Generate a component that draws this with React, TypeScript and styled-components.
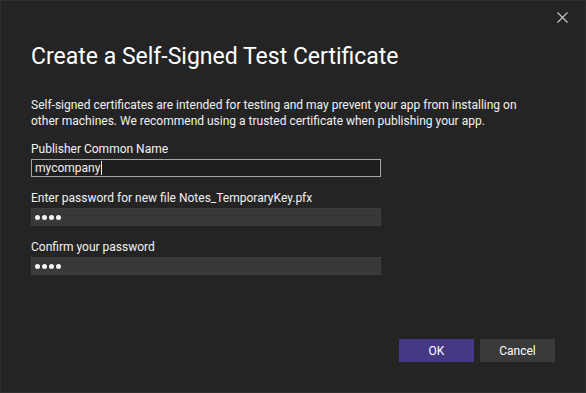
import styled, { createGlobalStyle } from 'styled-components';

const GlobalStyle = createGlobalStyle`
  html, body {
    margin: 0;
    padding: 0;
    background: #242424;
  }
  * {
    box-sizing: border-box;
  }
`;

// password fields just show masked dots
const fields = [
  { label: 'Publisher Common Name', value: 'mycompany', secret: false },
  { label: 'Enter password for new file Notes_TemporaryKey.pfx', value: 'pass', secret: true },
  { label: 'Confirm your password', value: 'pass', secret: true },
];

export default function App() {
  return (
    <>
      <GlobalStyle />
      <Dialog>
        <CloseButton aria-label="Close">
          <svg width="11" height="11" viewBox="0 0 11 11">
            <path d="M0.5 0.5 L10.5 10.5 M10.5 0.5 L0.5 10.5" stroke="#c8c8c8" strokeWidth="1.1" />
          </svg>
        </CloseButton>

        <Title>Create a Self-Signed Test Certificate</Title>
        <Description>
          Self-signed certificates are intended for testing and may prevent your app from installing on
          other machines. We recommend using a trusted certificate when publishing your app.
        </Description>

        <Form>
          {fields.map((f) => (
            <Field key={f.label}>
              <Label>{f.label}</Label>
              <InputBox $focused={!f.secret}>
                {f.secret ? (
                  <Dots>
                    {f.value.split('').map((_, i) => (
                      <Dot key={i} />
                    ))}
                  </Dots>
                ) : (
                  <>
                    {f.value}
                    <Caret />
                  </>
                )}
              </InputBox>
            </Field>
          ))}
        </Form>

        <Footer>
          <Button $primary>OK</Button>
          <Button>Cancel</Button>
        </Footer>
      </Dialog>
    </>
  );
}

const Dialog = styled.div`
  position: relative;
  width: 586px;
  height: 393px;
  background: #242424;
  border: 1px solid #2f2f2f;
  display: flex;
  flex-direction: column;
  padding: 0 30px 30px 30px;
  font-family: 'Segoe UI', Roboto, 'Noto Sans', sans-serif;
  font-size: 12px;
  color: #f2f2f2;
`;

const CloseButton = styled.div`
  position: absolute;
  top: 11px;
  right: 17px;
  width: 11px;
  height: 11px;
  display: flex;
`;

const Title = styled.h1`
  margin: 40px 0 0 0;
  font-size: 23px;
  font-weight: 400;
  line-height: 32px;
  color: #ffffff;
`;

const Description = styled.p`
  margin: 24px 0 0 0;
  line-height: 16px;
  max-width: 490px;
`;

const Form = styled.div`
  display: flex;
  flex-direction: column;
  gap: 13px;
  margin-top: 12px;
`;

const Field = styled.div`
  display: flex;
  flex-direction: column;
  gap: 2px;
`;

const Label = styled.div`
  line-height: 16px;
`;

const InputBox = styled.div<{ $focused?: boolean }>`
  width: 350px;
  height: 18px;
  padding: 0 3px;
  display: flex;
  align-items: center;
  line-height: 16px;
  background: ${(p) => (p.$focused ? '#1e1e1e' : '#383838')};
  border: 1px solid ${(p) => (p.$focused ? '#a6a6a6' : '#3e3e3e')};
`;

const Caret = styled.span`
  display: inline-block;
  width: 1px;
  height: 14px;
  background: #f2f2f2;
  margin-left: 1px;
`;

const Dots = styled.span`
  display: flex;
  gap: 2px;
`;

const Dot = styled.span`
  width: 5px;
  height: 5px;
  border-radius: 50%;
  background: #f4f4f4;
`;

const Footer = styled.div`
  margin-top: auto;
  display: flex;
  justify-content: flex-end;
  gap: 6px;
`;

const Button = styled.div<{ $primary?: boolean }>`
  width: 75px;
  height: 23px;
  display: flex;
  align-items: center;
  justify-content: center;
  font-size: 12px;
  color: #ffffff;
  background: ${(p) => (p.$primary ? '#463983' : '#3a3a3a')};
`;
